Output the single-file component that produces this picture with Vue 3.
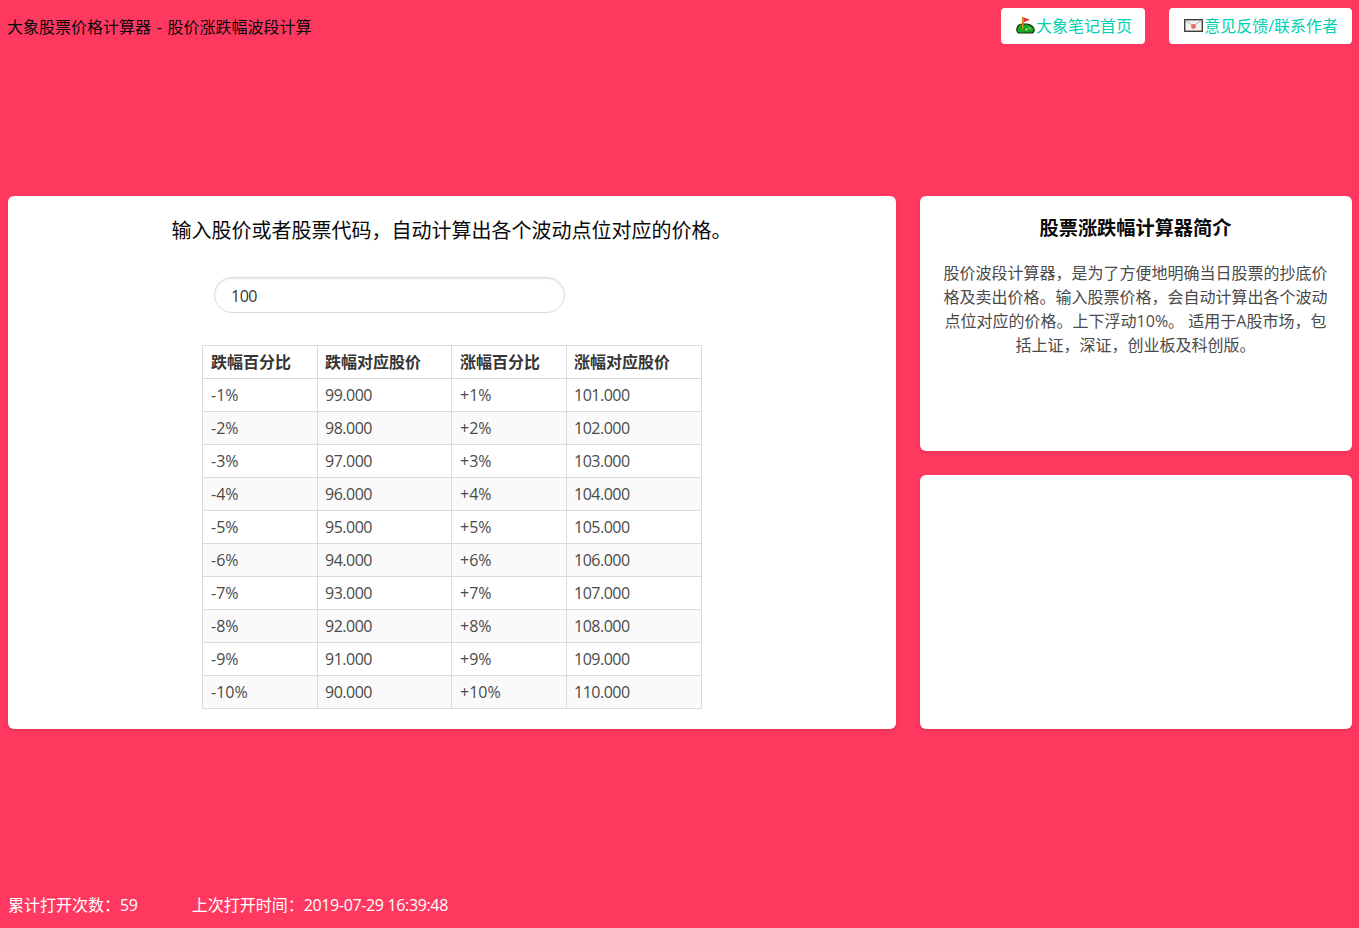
<script setup>
const rows = Array.from({ length: 10 }, (_, i) => {
  const n = i + 1
  return {
    down: `-${n}%`,
    downPrice: (100 - n).toFixed(3),
    up: `+${n}%`,
    upPrice: (100 + n).toFixed(3)
  }
})
</script>

<template>
  <div class="page">
    <header class="top">
      <div class="title">大象股票价格计算器 - 股价涨跌幅波段计算</div>
      <nav class="links">
        <a class="btn">
          <svg class="ico" viewBox="0 0 19 18" width="19" height="18">
            <path d="M.8 13.5C.8 10.2 3.5 8 6 8h4.5c3.5 0 7.7 2.6 7.7 5.7 0 2.3-1.6 3.3-3.6 3.3H3.6C2 17 .8 15.6.8 13.5z" fill="#17a81d" stroke="#1b2b14" stroke-width="1.2"/>
            <path d="M12 11.5l3 1.5" stroke="#7fdc5e" stroke-width="1.2"/>
            <rect x="6" y="1" width="1.8" height="12" fill="#d97a1a"/>
            <path d="M7.8 1.4l6.2 2.4-6.2 2.4z" fill="#e0352b"/>
            <circle cx="10.5" cy="13.5" r=".9" fill="#fff"/>
          </svg>大象笔记首页
        </a>
        <a class="btn">
          <svg class="ico" viewBox="0 0 19 18" width="19" height="18">
            <rect x=".7" y="3.7" width="17.6" height="11.6" fill="#f4f1ee" stroke="#3d3d3d" stroke-width="1.4"/>
            <path d="M1.5 4.5l8 5.5 8-5.5" fill="none" stroke="#b5b0ab"/>
            <circle cx="9.5" cy="10.5" r="2.4" fill="#e8695f"/>
          </svg>意见反馈/联系作者
        </a>
      </nav>
    </header>

    <main class="main">
      <section class="card calc">
        <h2 class="lead">输入股价或者股票代码，自动计算出各个波动点位对应的价格。</h2>
        <div class="input-row">
          <input class="price" type="text" value="100" />
        </div>
        <table class="tbl">
          <thead>
            <tr>
              <th class="c1">跌幅百分比</th>
              <th class="c2">跌幅对应股价</th>
              <th class="c3">涨幅百分比</th>
              <th class="c4">涨幅对应股价</th>
            </tr>
          </thead>
          <tbody>
            <tr v-for="r in rows" :key="r.down">
              <td class="pct">{{ r.down }}</td>
              <td>{{ r.downPrice }}</td>
              <td class="pct">{{ r.up }}</td>
              <td>{{ r.upPrice }}</td>
            </tr>
          </tbody>
        </table>
      </section>

      <aside class="side">
        <section class="card intro">
          <h3 class="intro-title">股票涨跌幅计算器简介</h3>
          <p class="intro-text">股价波段计算器，是为了方便地明确当日股票的抄底价格及卖出价格。输入股票价格，会自动计算出各个波动点位对应的价格。上下浮动10%。 适用于A股市场，包括上证，深证，创业板及科创版。</p>
        </section>
        <section class="card empty"></section>
      </aside>
    </main>

    <footer class="foot">
      <span>累计打开次数：<span class="num">59</span></span>
      <span>上次打开时间：<span class="num">2019-07-29 16:39:48</span></span>
    </footer>
  </div>
</template>

<style>
html, body { margin: 0; padding: 0; }
</style>

<style scoped>
.page {
  height: 928px;
  box-sizing: border-box;
  background: #ff3860;
  padding: 8px 7px 0 8px;
  display: flex;
  flex-direction: column;
  font-family: "Open Sans", "Noto Sans CJK SC", sans-serif;
  font-size: 16px;
  color: #4a4a4a;
  overflow: hidden;
}
.top {
  display: flex;
  justify-content: space-between;
  height: 36px;
}
.title {
  color: #0a0a0a;
  line-height: 38px;
  word-spacing: 1.5px;
  margin-left: -1px;
}
.links { display: flex; gap: 24px; }
.btn {
  display: flex;
  align-items: center;
  height: 36px;
  box-sizing: border-box;
  padding: 0 14px 2px 15px;
  background: #fff;
  border-radius: 4px;
  color: #00d1b2;
  white-space: nowrap;
}
.btn:first-child { padding-right: 13px; }
.ico { display: block; flex: none; margin-right: 1px; }
.main {
  margin-top: 152px;
  display: flex;
  gap: 24px;
  height: 533px;
}
.card {
  background: #fff;
  border-radius: 6px;
  box-shadow: 0 2px 3px rgba(10, 10, 10, 0.1);
  box-sizing: border-box;
}
.calc {
  width: 888px;
  flex: none;
  padding: 21px 0 0;
}
.lead {
  margin: 0;
  padding-right: 1px;
  font-size: 20px;
  font-weight: 400;
  line-height: 28px;
  color: #0a0a0a;
  text-align: center;
}
.input-row { margin: 32px 0 0 206px; }
.price {
  display: block;
  width: 351px;
  height: 36px;
  box-sizing: border-box;
  border: 1px solid #dbdbdb;
  border-radius: 18px;
  box-shadow: inset 0 1px 2px rgba(10, 10, 10, 0.1);
  padding: 1px 16px 0;
  font: 16px "Open Sans", sans-serif;
  letter-spacing: -0.5px;
  color: #363636;
  outline: none;
}
.tbl {
  margin: 32px 0 0 194px;
  width: 500px;
  border-collapse: collapse;
  table-layout: fixed;
}
.tbl th, .tbl td {
  border: 1px solid #dbdbdb;
  height: 33px;
  box-sizing: border-box;
  padding: 0 8px;
  text-align: left;
  line-height: 22px;
}
.tbl th:nth-child(2), .tbl td:nth-child(2),
.tbl th:nth-child(4), .tbl td:nth-child(4) { padding-left: 7px; }
.tbl th { font-weight: 700; color: #363636; font-size: 16px; }
.tbl td { font-size: 16px; letter-spacing: -0.5px; color: #4a4a4a; }
.tbl td.pct { letter-spacing: 0; }
.tbl tbody tr:nth-child(even) { background: #fafafa; }
.c1 { width: 115px; }
.c2 { width: 134px; }
.c3 { width: 115px; }
.c4 { width: 135px; }
.side {
  width: 432px;
  flex: none;
  display: flex;
  flex-direction: column;
  gap: 24px;
}
.intro {
  height: 255px;
  padding: 18px 24.5px 0 23.5px;
  text-align: center;
}
.intro-title {
  margin: 0;
  font-size: 19.2px;
  font-weight: 700;
  line-height: 27px;
  color: #0a0a0a;
}
.intro-text {
  margin: 20px 0 0;
  line-height: 24px;
  color: #4a4a4a;
  font-size: 16px;
}
.empty { flex: 1; }
.foot {
  margin-top: auto;
  height: 35px;
  display: flex;
  gap: 54px;
  color: #fff;
  line-height: 24px;
}
.num { letter-spacing: -0.35px; }
</style>
